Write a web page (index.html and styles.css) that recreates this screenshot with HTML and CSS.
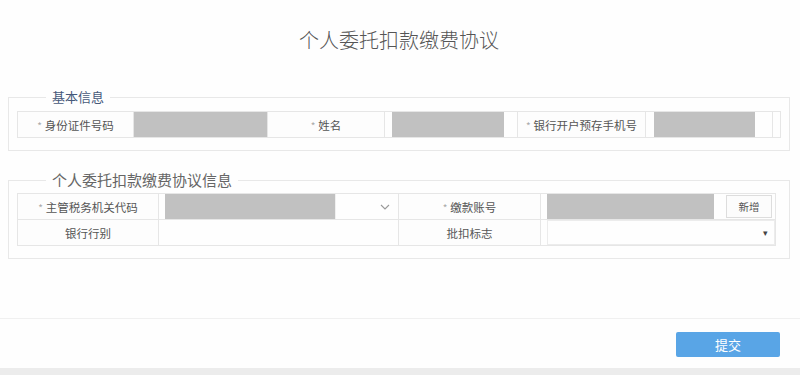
FILE: index.html
```html
<!DOCTYPE html>
<html>
<head>
  <meta charset="utf-8">
  <meta name="viewport" content="width=device-width, initial-scale=1.0">
  <title>个人委托扣款缴费协议</title>
  <link rel="stylesheet" href="styles.css">
</head>
<body>
  <div class="page">
    <div class="content">
      <h1 class="title">个人委托扣款缴费协议</h1>

      <fieldset class="group">
        <legend class="legend-blue">基本信息</legend>
        <table class="form-table basic">
          <colgroup>
            <col style="width:116px"><col style="width:134px"><col style="width:117px">
            <col style="width:133px"><col style="width:128px"><col style="width:135px">
          </colgroup>
          <tr>
            <td class="label"><span class="req">*</span>身份证件号码</td>
            <td class="field"><div class="mask full"></div></td>
            <td class="label"><span class="req">*</span>姓名</td>
            <td class="field pad-name"><div class="mask"></div></td>
            <td class="label"><span class="req">*</span>银行开户预存手机号</td>
            <td class="field pad-phone"><div class="phone-box"><div class="mask"></div></div></td>
          </tr>
        </table>
      </fieldset>

      <fieldset class="group second">
        <legend>个人委托扣款缴费协议信息</legend>
        <table class="form-table agree">
          <colgroup>
            <col style="width:141px"><col style="width:240px"><col style="width:142px"><col style="width:235px">
          </colgroup>
          <tr>
            <td class="label"><span class="req">*</span>主管税务机关代码</td>
            <td class="field">
              <div class="combo">
                <div class="mask"></div>
                <div class="combo-arrow">
                  <svg width="10" height="6" viewBox="0 0 10 6"><path d="M1 1l4 4 4-4" fill="none" stroke="#999" stroke-width="1.1"/></svg>
                </div>
              </div>
            </td>
            <td class="label"><span class="req">*</span>缴款账号</td>
            <td class="field">
              <div class="account">
                <div class="mask"></div>
                <button class="add-btn">新增</button>
              </div>
            </td>
          </tr>
          <tr>
            <td class="label">银行行别</td>
            <td class="field"></td>
            <td class="label">批扣标志</td>
            <td class="field">
              <div class="select-box"><span class="caret">&#9662;</span></div>
            </td>
          </tr>
        </table>
      </fieldset>
    </div>

    <div class="footer">
      <button class="submit">提交</button>
    </div>
  </div>
</body>
</html>
```

FILE: styles.css
```css
body {
  margin: 0;
  padding: 0;
  font-family: "Noto Sans CJK SC", "Noto Sans", sans-serif;
  background-color: #ececec;
  color: #555;
}

.page {
  width: 800px;
  height: 368px;
  background-color: #fefefe;
  display: flex;
  flex-direction: column;
}

.content {
  flex: 1;
  padding: 0 10px 0 8px;
  border-bottom: 1px solid #f0f0f0;
}

.title {
  margin: 0;
  height: 80px;
  line-height: 80px;
  text-align: center;
  font-size: 20px;
  font-weight: 300;
  color: #555;
}

.group {
  margin: 9px 0 0;
  padding: 6px 8px 12px;
  border: 1px solid #e8e8e8;
  min-width: 0;
}

.group.second {
  margin-top: 20px;
  padding-top: 4px;
}

.group legend {
  margin-left: 29px;
  padding: 0 6px;
  font-size: 15px;
  line-height: 18px;
  color: #666;
}

.group .legend-blue {
  font-size: 13px;
  line-height: 16px;
  color: #46597a;
}

.form-table {
  border-collapse: collapse;
  table-layout: fixed;
}

.form-table.basic { width: 763px; }
.form-table.agree { width: 758px; }

.form-table td {
  border: 1px solid #e6e6e6;
  height: 25px;
  padding: 0;
  font-size: 11.5px;
}

.label {
  text-align: center;
  background-color: #fdfdfd;
  color: #555;
  white-space: nowrap;
}

.req {
  color: #aaa;
  font-size: 10px;
  margin-right: 3px;
}

.field {
  vertical-align: middle;
}

.mask {
  height: 25px;
  background-color: #c1c1c1;
}

.pad-name {
  padding: 0 13px 0 7px !important;
}

.pad-phone {
  padding: 0 7px 0 8px !important;
}

.phone-box {
  border-right: 1px solid #e6e6e6;
  padding-right: 17px;
}

.combo {
  display: flex;
  padding-left: 6px;
}

.combo .mask {
  width: 172px;
}

.combo-arrow {
  width: 54px;
  display: flex;
  align-items: center;
  justify-content: flex-end;
  padding-right: 8px;
  border-left: 1px solid #f0f0f0;
}

.account {
  display: flex;
  align-items: center;
  padding-left: 6px;
}

.account .mask {
  width: 167px;
}

.add-btn {
  margin-left: 12px;
  width: 46px;
  height: 23px;
  border: 1px solid #ddd;
  background-color: #fcfcfc;
  font-family: inherit;
  font-size: 10.5px;
  color: #555;
  padding: 0;
}

.select-box {
  height: 23px;
  margin-left: 6px;
  border: 1px solid #ececec;
  display: flex;
  align-items: center;
  justify-content: flex-end;
  padding-right: 6px;
}

.caret {
  font-size: 9px;
  color: #444;
}

.footer {
  height: 49px;
  display: flex;
  justify-content: flex-end;
  align-items: flex-start;
  padding: 13px 20px 0 0;
  box-sizing: border-box;
}

.submit {
  width: 104px;
  height: 25px;
  border: none;
  border-radius: 2px;
  background-color: #59a5e6;
  color: #fff;
  font-family: inherit;
  font-size: 13px;
  padding: 0;
}
```
